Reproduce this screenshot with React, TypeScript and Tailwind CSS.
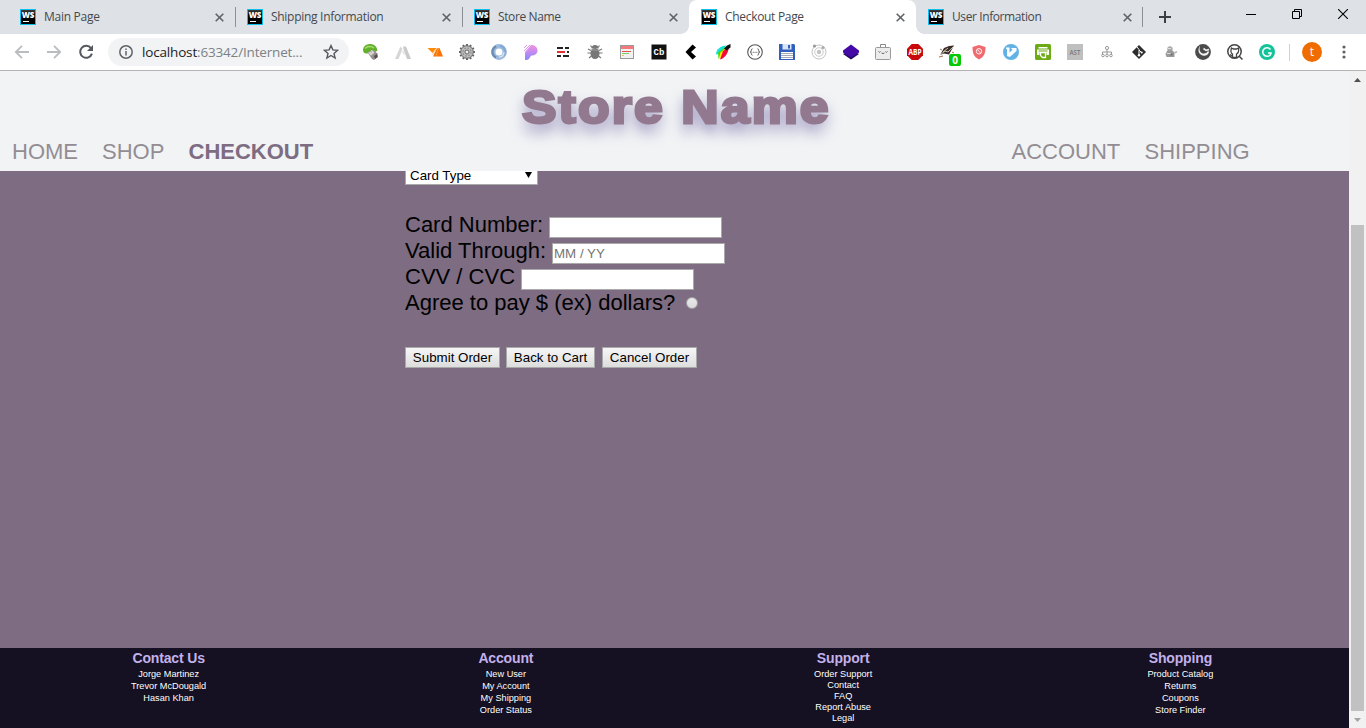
import React from "react";

type IconProps = { children: React.ReactNode; size?: number };

function Glyph({ children, size = 16 }: IconProps) {
  return (
    <svg width={size} height={size} viewBox={`0 0 ${size} ${size}`} className="block shrink-0" aria-hidden="true">
      {children}
    </svg>
  );
}

function WebStormIcon() {
  return (
    <span className="flex h-4 w-4 shrink-0 flex-col bg-[#0cc0ee] p-px">
      <span className="flex h-[14px] w-[14px] flex-col items-center bg-linear-to-b from-[#3c3c3c] to-black to-60%">
        <span className="mt-px h-[7px] font-['Open_Sans',sans-serif] text-[8px] leading-[7px] font-extrabold tracking-[-0.3px] text-white">WS</span>
        <span className="mt-[3px] mr-[5px] h-px w-[6px] bg-white" />
      </span>
    </span>
  );
}

function Close() {
  return (
    <Glyph size={9}>
      <path d="M.7.7l7.6 7.6M8.3.7L.7 8.3" stroke="#5f6368" strokeWidth="1.6" />
    </Glyph>
  );
}

type TabInfo = { title: string; tracking: string; active?: boolean; divider?: string };

const tabs: TabInfo[] = [
  { title: "Main Page", tracking: "tracking-[-0.27px]", divider: "right-[-1px]" },
  { title: "Shipping Information", tracking: "tracking-[-0.29px]", divider: "right-[-1px]" },
  { title: "Store Name", tracking: "tracking-[-0.38px]" },
  { title: "Checkout Page", tracking: "tracking-[-0.31px]", active: true },
  { title: "User Information", tracking: "tracking-[-0.4px]", divider: "right-0" },
];

function Tab({ title, tracking, active, divider }: TabInfo) {
  return (
    <div className={`relative flex h-[34px] w-[227px] shrink-0 items-center pr-[11px] pl-3 ${active ? "rounded-t-lg bg-white" : ""}`}>
      {active && (
        <>
          <span className="absolute bottom-0 -left-2 h-2 w-2 bg-[radial-gradient(circle_at_0_0,#dee1e6_7.5px,#fff_8px)]" />
          <span className="absolute -right-2 bottom-0 h-2 w-2 bg-[radial-gradient(circle_at_100%_0,#dee1e6_7.5px,#fff_8px)]" />
        </>
      )}
      <WebStormIcon />
      <span className={`ml-2 flex-1 font-['Open_Sans',sans-serif] text-[12px] leading-4 whitespace-nowrap text-[#45494d] ${tracking}`}>{title}</span>
      <Close />
      {divider && <span className={`absolute top-[7px] h-5 w-px bg-[#8d9095] ${divider}`} />}
    </div>
  );
}

function TabStrip() {
  return (
    <div className="flex h-[34px] bg-[#dee1e6] pl-2">
      {tabs.map((t) => (
        <Tab key={t.title} {...t} />
      ))}
      <div className="flex flex-1 items-center pl-[16px]">
        <Glyph size={12}>
          <path d="M6 0v12M0 6h12" stroke="#3c4043" strokeWidth="2" />
        </Glyph>
      </div>
      <div className="flex h-7 items-center gap-[36px] pr-[18px]">
        <Glyph size={10}>
          <path d="M0 5.5h10" stroke="#000" />
        </Glyph>
        <Glyph size={10}>
          <path d="M.5 2.5h7v7h-7zM2.5 2.5v-2h7v7h-2" fill="none" stroke="#000" />
        </Glyph>
        <Glyph size={10}>
          <path d="M0 0l10 10M10 0L0 10" stroke="#000" strokeWidth="1.100" />
        </Glyph>
      </div>
    </div>
  );
}

const gearTeeth = [0, 30, 60, 90, 120, 150];

const extensions: React.ReactNode[] = [
  <>
    <path d="M0 6.500C0 2 3.500 0 7.500 0c4 .2 6.500 3 7 6.500L12 8 9 6 4.500 9.500C2 9.500 .3 9 0 6.500z" fill="#62b02c" />
    <path d="M2 4.500C4.500 2 8.500 2 11 4" stroke="#a5dc6e" strokeWidth="1.500" fill="none" />
    <path d="M4.500 8.500l6-2.500 4 3.500.5 3.500L11 16l-2-1z" fill="#96908c" />
    <path d="M5 8.800l5-2 1.500 2-3.500 3z" fill="#d5d2d0" />
    <path d="M11 12l3-2 .5 3-2.500 2z" fill="#594c4d" />
  </>,
  <>
    <path d="M5.500 2.500L7.500 5 3.500 15H0z" fill="#d6d6d6" />
    <path d="M8 2.500h3L16 15h-4L8.500 5z" fill="#cacaca" />
    <path d="M7 8l1.500-2 1.500 4-1 1z" fill="#e4e4e4" />
  </>,
  <>
    <path d="M.500 4h9L5.500 9z" fill="#ff8a08" />
    <path d="M10 4h2.500l3.500 8.500H6z" fill="#f97305" />
    <path d="M5.500 10.500L10.500 4M9 12l2.500-8" stroke="#ffb05c" strokeWidth=".7" />
  </>,
  <>
    {gearTeeth.map((a) => (
      <path key={a} d="M8 0v16" stroke="#666" strokeWidth="2" transform={`rotate(${a} 8 8)`} />
    ))}
    <circle cx="8" cy="8" r="6.300" fill="#bcbcbc" stroke="#6d6d6d" />
    <circle cx="8" cy="8" r="4" fill="none" stroke="#8a8a8a" strokeWidth="1.200" strokeDasharray="1.600 1.540" />
    <circle cx="8" cy="8" r="2" fill="#eee" stroke="#666" />
  </>,
  <>
    <circle cx="8" cy="8" r="5.700" fill="none" stroke="#9db9db" strokeWidth="4.400" />
    <path d="M5 13.500C.5 11 0 5 5 2.200" stroke="#6b8cb2" strokeWidth="2.200" fill="none" />
    <path d="M9 1.700c4.500.5 7 6 3.500 10" stroke="#84a9d6" strokeWidth="2" fill="none" />
    <path d="M8 12.800c3 .4 5-2 5-4.500" stroke="#d9e6f5" strokeWidth="1.400" fill="none" />
  </>,
  <>
    <defs>
      <linearGradient id="pvg" x1="0" y1="0" x2="0" y2="1">
        <stop offset="0" stopColor="#f58fe0" />
        <stop offset="1" stopColor="#8a87ff" />
      </linearGradient>
    </defs>
    <path d="M8 1c4.500 0 6.500 2.500 6.500 5.500s-2.500 5-6 5c-1.500 0-1.500 4.500-5 4.500H2V8z" fill="url(#pvg)" />
    <path d="M1 4l3-3M1 7l6-6M2 9l6.500-7" stroke="#dd99f2" strokeWidth="1" />
  </>,
  <>
    <path d="M2 4h6M10 4h4M2 12h4M8 12h6" stroke="#222" strokeWidth="2" />
    <path d="M2 8h8" stroke="#e63030" strokeWidth="2" />
    <path d="M12 8h2" stroke="#222" strokeWidth="2" />
  </>,
  <>
    <path d="M5 3.500L3.500 1.500M11 3.500l1.500-2M1 5l3 1.500M15 5l-3 1.500M.5 9H4M15.500 9H12M2 14l2.500-2M14 14l-2.500-2" stroke="#777" strokeWidth="1.200" />
    <ellipse cx="8" cy="9.500" rx="4.500" ry="5.500" fill="#777" />
    <path d="M4.500 4.500a3.500 3.500 0 017 0z" fill="#777" />
    <path d="M4 6h8" stroke="#aaa" strokeWidth=".7" />
  </>,
  <>
    <rect x="1.500" y="1.500" width="13" height="13" fill="#f1f1f1" stroke="#999" />
    <path d="M2 3.500h12" stroke="#f17a7a" strokeWidth="3" />
    <path d="M3 7.500h9" stroke="#e45050" />
    <path d="M3 9.500h7" stroke="#79d070" />
    <path d="M3 11.500h2" stroke="#e8c34d" />
  </>,
  <>
    <rect x=".5" y=".5" width="15" height="15" fill="#111" />
    <text x="8" y="11" textAnchor="middle" fill="#fff" className="font-['Liberation_Mono',monospace] text-[9px] font-bold">Cb</text>
  </>,
  <path d="M9.500.5L13 3.500 8 8l5 4.500-3.500 3L2.500 8z" fill="#000" />,
  <>
    <path d="M11 1.500C6 2 1 5 1 10.500l5-1z" fill="#18dfdb" />
    <path d="M12 2L3 8.500l.5 6.500L10 8z" fill="#3bdb12" />
    <path d="M12 3L5.500 8.500 3.500 15.500l6-5z" fill="#ffe600" />
    <path d="M14 3L8 7l-3 8.500c4-1 8-5 9-12.500z" fill="#f30838" />
    <path d="M9 4.500L12 1.500 15.500 0 15.500 3.500l-4 3z" fill="#111" />
  </>,
  <>
    <circle cx="8" cy="8" r="7.300" fill="none" stroke="#555" strokeWidth="1.100" />
    <path d="M5.500 4.800c-1.500 0-1 1.700-1.300 2.500-.2.500-.7.700-1.200.7.500 0 1 .2 1.200.7.300.8-.2 2.500 1.300 2.500M10.500 4.800c1.500 0 1 1.700 1.300 2.500.2.500.7.700 1.200.7-.5 0-1 .2-1.200.7-.3.800.2 2.500-1.300 2.500" stroke="#555" fill="none" />
    <path d="M5.700 8.300h1M7.500 8.300h1M9.300 8.300h1" stroke="#555" />
  </>,
  <>
    <path d="M0 0h15l1 1v15H0z" fill="#315fbc" />
    <rect x="3.500" y="0" width="9" height="5.500" fill="#d8e4f7" />
    <rect x="9" y="1" width="2" height="3.500" fill="#315fbc" />
    <rect x="2" y="8" width="12" height="7" fill="#fff" />
    <path d="M2 9.500h12M2 11.500h12M2 13.500h12" stroke="#a5a9b5" />
  </>,
  <>
    <circle cx="8" cy="8" r="7" fill="none" stroke="#c4c4c4" />
    <circle cx="8" cy="8" r="4.300" fill="none" stroke="#ccc" />
    <circle cx="8" cy="8" r="2.200" fill="#c4c4c4" />
    <circle cx="3.500" cy="2" r="1.600" fill="#999" />
    <circle cx="12" cy="3.500" r="1.500" fill="#aaa" />
  </>,
  <>
    <path d="M0 10l8-4 8 4-8 5.500z" fill="#220861" />
    <path d="M0 6.500L8 .5l8 6v2L8 13.500 0 8.500z" fill="#4509a7" />
  </>,
  <>
    <path d="M5.500 3V.5h5V3" fill="none" stroke="#888" />
    <rect x=".500" y="3.500" width="15" height="12" rx="1" fill="#ececec" stroke="#999" />
    <path d="M3.500 7.500q1 1.500 2 0M10.500 7.500q1 1.500 2 0M6.500 9q1.500 1 3 0" stroke="#666" fill="none" />
  </>,
  <>
    <path d="M4.700 0h6.600L16 4.700v6.600L11.300 16H4.700L0 11.300V4.700z" fill="#c80a0d" />
    <text x="8" y="11" textAnchor="middle" fill="#fff" textLength="13" lengthAdjust="spacingAndGlyphs" className="font-['Open_Sans',sans-serif] text-[8.500px] font-bold">ABP</text>
  </>,
  <>
    <path d="M1 11l4-7 5-2 5-.5-2.500 4.500L10 10.500l-5-1z" fill="#3a2d26" />
    <path d="M1 11l5-4 3 1 5-5M4 8L9 4" stroke="#e9ded2" strokeWidth=".8" fill="none" />
    <path d="M3 6l-2-1M13 8l2 1M0 13l4-1" stroke="#a76b43" />
  </>,
  <>
    <path d="M8 1l6.500 2c0 6-1 9.500-6.500 12.500C2.500 12.500 1.500 9 1.500 3z" fill="#ef6a6f" />
    <circle cx="8" cy="7.300" r="2.700" fill="none" stroke="#fff" strokeWidth=".9" />
    <path d="M6.200 5.500l3.600 3.600" stroke="#fff" strokeWidth=".9" />
  </>,
  <>
    <circle cx="8" cy="8" r="8" fill="#62b2e6" />
    <path d="M3 3.500h3.500V8.500L9.500 6 8 4h5.500v3L6.800 13 4 12V5H3z" fill="#fff" />
  </>,
  <>
    <rect width="16" height="16" rx="1.500" fill="#6caa16" />
    <path d="M3.500 3h9v1.500h-9zM2 5.500h12V11h-2.500V8.500h-7V11H2z" fill="#fff" />
    <path d="M5.500 8.500h5v5h-3l-2-2z" fill="none" stroke="#fff" strokeWidth="1.300" />
    <path d="M3.500 7h9" stroke="#6caa16" />
  </>,
  <>
    <rect width="16" height="16" fill="#bfbfbf" />
    <text x="8" y="10.700" textAnchor="middle" fill="#777" textLength="11" lengthAdjust="spacingAndGlyphs" className="font-['Open_Sans',sans-serif] text-[7.500px] font-semibold">AST</text>
  </>,
  <>
    <path d="M8 4v9M3.500 11V8h9v3" stroke="#999" fill="none" />
    <circle cx="8" cy="4" r="1.600" fill="#fff" stroke="#999" />
    <circle cx="4" cy="11.500" r="1.300" fill="#fff" stroke="#999" />
    <circle cx="8" cy="11.500" r="1.300" fill="#fff" stroke="#999" />
    <circle cx="12" cy="11.500" r="1.300" fill="#fff" stroke="#999" />
  </>,
  <>
    <path d="M8 1l7 7-7 7-7-7z" fill="#2d2d2d" />
    <path d="M6 3l2 2.500v6M8 6l2.500 2.500" stroke="#fff" strokeWidth="1" fill="none" />
    <circle cx="8" cy="11.200" r="1.200" fill="#fff" />
    <circle cx="10.700" cy="8.500" r="1.100" fill="#fff" />
  </>,
  <>
    <circle cx="7" cy="5" r="2.700" fill="#aaa" />
    <path d="M4.500 6.500h5l2 2V13h-8L2.500 10z" fill="#999" />
    <path d="M11.500 9l2.500-1.500" stroke="#bbb" strokeWidth="1.500" />
    <path d="M4 9.500h4M5 4.500h3" stroke="#ddd" />
    <circle cx="8.500" cy="10.500" r="1.200" fill="#777" />
  </>,
  <>
    <circle cx="8" cy="8" r="7.900" fill="#4b4b4b" />
    <path d="M5 1.500C4 5 4.500 8 7 9.200c2.500 1 5.500-.2 6-2.700l1 1.500c-.5 3-3.500 4.500-6.500 3.500C3 10 2.500 5.500 5 1.500z" fill="#efefef" />
    <path d="M8.500 4.500l2.500 1.800 3-.8" stroke="#efefef" strokeWidth="1.600" fill="none" />
  </>,
  <>
    <circle cx="7.500" cy="7.500" r="6.700" fill="#fff" stroke="#444" strokeWidth="1.500" />
    <path d="M4.500 4l2 1h3l2-1c.5 3 .5 5-2 6v3.500h-4V10C3.500 9 3.500 7 4.500 4z" fill="#fff" stroke="#444" strokeWidth="1.300" />
    <path d="M3 10.500l2 1.500M12 12l3.500 3.500" stroke="#444" strokeWidth="1.500" />
  </>,
  <>
    <circle cx="8" cy="8" r="8" fill="#15c39a" />
    <path d="M11.500 5.500A4.300 4.300 0 108 12.300c2.400 0 3.700-1.300 4-3.300H9" fill="none" stroke="#fff" strokeWidth="1.600" />
  </>,
];

function Toolbar() {
  return (
    <div className="flex h-[37px] items-center border-b border-[#b5b3b6] bg-white">
      <div className="flex items-center gap-4 pl-[14px]">
        <Glyph>
          <path d="M15 8H2M8 1.800L1.800 8 8 14.200" fill="none" stroke="#babcbe" strokeWidth="1.800" />
        </Glyph>
        <Glyph>
          <path d="M1 8h13M8 1.800L14.200 8 8 14.200" fill="none" stroke="#babcbe" strokeWidth="1.800" />
        </Glyph>
        <Glyph>
          <path d="M13 4.200A6 6 0 1013.900 9.600" fill="none" stroke="#55595e" strokeWidth="2" />
          <path d="M15 1v6H9z" fill="#55595e" />
        </Glyph>
      </div>
      <div className="ml-[14px] flex h-7 w-[241px] items-center rounded-full bg-[#f1f3f4] pr-[10px] pl-[11px]">
        <Glyph>
          <circle cx="7" cy="8" r="6.200" fill="none" stroke="#5f6368" strokeWidth="1.500" />
          <path d="M7 7v4.500M7 4.500V6" stroke="#5f6368" strokeWidth="1.500" />
        </Glyph>
        <span className="ml-[7px] flex-1 font-['Open_Sans',sans-serif] text-[13.500px] leading-5 tracking-[-0.17px] whitespace-nowrap text-[#7c8186]">
          <span className="text-[#202124]">localhost</span>:63342/Internet...
        </span>
        <Glyph>
          <path d="M8 1.600l1.900 4.300 4.700.4-3.600 3.100 1.100 4.600L8 11.500 3.900 14 5 9.400 1.400 6.300l4.700-.4z" fill="none" stroke="#55595e" strokeWidth="1.400" />
        </Glyph>
      </div>
      <div className="ml-[14px] flex items-center gap-4">
        {extensions.map((art, i) => (
          <span key={i} className="relative block h-4 w-4">
            <Glyph>{art}</Glyph>
            {i === 18 && (
              <span className="absolute top-[10px] left-[10px] flex h-3 w-3 items-center justify-center rounded-[2px] bg-[#06c806] font-['Open_Sans',sans-serif] text-[10px] leading-3 font-bold text-white">0</span>
            )}
          </span>
        ))}
      </div>
      <span className="ml-[14px] h-[17px] w-px bg-[#cfd1d4]" />
      <span className="ml-[12px] flex h-5 w-5 items-center justify-center rounded-full bg-[#ef6c00] font-['Open_Sans',sans-serif] text-[12px] leading-5 text-white">t</span>
      <svg width="4" height="14" viewBox="0 0 4 14" className="ml-[20px]" aria-hidden="true">
        <circle cx="2" cy="2" r="1.600" fill="#5f6368" />
        <circle cx="2" cy="7" r="1.600" fill="#5f6368" />
        <circle cx="2" cy="12" r="1.600" fill="#5f6368" />
      </svg>
    </div>
  );
}

function StoreHeader() {
  return (
    <header className="flex h-[100px] flex-col bg-[#f1f3f5]">
      <h1 className="flex h-[67px] justify-center">
        <span className="mt-[9px] ml-[3px] block origin-center scale-x-[1.1] text-[47px] leading-[54px] font-bold tracking-[1.950px] whitespace-nowrap text-[#92798f] [-webkit-text-stroke:2.800px_#92798f] [text-shadow:0_9px_13px_rgba(75,60,140,0.6)]">
          Store Name
        </span>
      </h1>
      <nav className="flex h-[33px] items-start text-[22px] leading-[28px] text-[#938d93]">
        <a className="ml-[12px] w-[90px]">HOME</a>
        <a className="w-[86.500px]">SHOP</a>
        <a className="font-bold text-[#7d6c82]">CHECKOUT</a>
        <a className="ml-auto w-[133px]">ACCOUNT</a>
        <a className="mr-[98.500px] w-[106px]">SHIPPING</a>
      </nav>
    </header>
  );
}

function Field({ label, placeholder, labelWidth }: { label: string; placeholder?: string; labelWidth: string }) {
  return (
    <label className="flex h-[26px] items-start">
      <span className={`whitespace-nowrap ${labelWidth}`}>{label}</span>
      <input
        type="text"
        placeholder={placeholder}
        className="mt-[5px] h-[21px] w-[173px] border border-[#a9a9a9] bg-white px-px text-[13.333px] leading-4 placeholder:text-[#757575]"
      />
    </label>
  );
}

function FormButton({ children, width }: { children: string; width: string }) {
  return (
    <button type="button" className={`h-[21px] border border-[#a9a9a9] bg-linear-to-b from-[#f6f6f6] to-[#dddddd] text-[13.333px] leading-[19px] whitespace-nowrap text-black ${width}`}>
      {children}
    </button>
  );
}

function CheckoutForm() {
  return (
    <main className="h-[477px] overflow-hidden bg-[#7d6c82] pl-[405px] text-[22px] leading-[26px] text-black">
      <div className="-mt-[6px] flex h-5 w-[133px] items-center justify-between border border-[#a9a9a9] bg-white pr-[5px] pl-1 text-[13.333px] leading-[18px]">
        <span className="pt-[2px]">Card Type</span>
        <svg width="7" height="6" viewBox="0 0 7 6" aria-hidden="true">
          <path d="M0 0h7L3.500 6z" fill="#000" />
        </svg>
      </div>
      <div className="mt-[27px]">
        <Field label="Card Number:" labelWidth="w-[144px]" />
        <Field label="Valid Through:" labelWidth="w-[147px]" placeholder="MM / YY" />
        <Field label="CVV / CVC" labelWidth="w-[116px]" />
        <label className="flex h-[26px] items-start">
          <span className="w-[281px] whitespace-nowrap">Agree to pay $ (ex) dollars?</span>
          <span className="mt-[7px] h-3 w-3 rounded-full border border-[#a3a0a3] bg-linear-to-b from-[#e8e8e8] to-[#dcdcdc]" />
        </label>
      </div>
      <div className="mt-[31px] flex">
        <FormButton width="w-[95px]">Submit Order</FormButton>
        <span className="w-[6px]" />
        <FormButton width="w-[89px]">Back to Cart</FormButton>
        <span className="w-[7px]" />
        <FormButton width="w-[95px]">Cancel Order</FormButton>
      </div>
    </main>
  );
}

const footerColumns = [
  { title: "Contact Us", items: ["Jorge Martinez", "Trevor McDougald", "Hasan Khan"], line: "leading-[12px]" },
  { title: "Account", items: ["New User", "My Account", "My Shipping", "Order Status"], line: "leading-[12px]" },
  { title: "Support", items: ["Order Support", "Contact", "FAQ", "Report Abuse", "Legal"], line: "leading-[11px] pt-[0.5px]" },
  { title: "Shopping", items: ["Product Catalog", "Returns", "Coupons", "Store Finder"], line: "leading-[12px]" },
];

function StoreFooter() {
  return (
    <footer className="grid h-20 grid-cols-4 bg-[#151022] text-center">
      {footerColumns.map((c) => (
        <section key={c.title}>
          <h2 className="mt-[2px] h-[18px] text-[14px] leading-[17px] font-bold tracking-[-0.150px] text-[#c3b1ea]">{c.title}</h2>
          <ul className={`text-[9.200px] text-white ${c.line}`}>
            {c.items.map((item) => (
              <li key={item}>{item}</li>
            ))}
          </ul>
        </section>
      ))}
    </footer>
  );
}

function Scrollbar() {
  return (
    <div className="flex w-[17px] flex-col items-center bg-[#f1f1f1]">
      <div className="flex h-[17px] items-center">
        <svg width="7" height="4" viewBox="0 0 7 4" aria-hidden="true">
          <path d="M0 4l3.500-4L7 4z" fill="#505050" />
        </svg>
      </div>
      <div className="mt-[137px] h-[486px] w-[13px] bg-[#c1c1c1]" />
      <div className="flex h-[17px] items-center">
        <svg width="7" height="4" viewBox="0 0 7 4" aria-hidden="true">
          <path d="M0 0l3.500 4L7 0z" fill="#a3a3a3" />
        </svg>
      </div>
    </div>
  );
}

export default function App() {
  return (
    <div className="flex h-[728px] w-[1366px] flex-col overflow-hidden font-['Liberation_Sans',Arial,sans-serif]">
      <TabStrip />
      <Toolbar />
      <div className="flex h-[657px]">
        <div className="w-[1349px]">
          <StoreHeader />
          <CheckoutForm />
          <StoreFooter />
        </div>
        <Scrollbar />
      </div>
    </div>
  );
}
